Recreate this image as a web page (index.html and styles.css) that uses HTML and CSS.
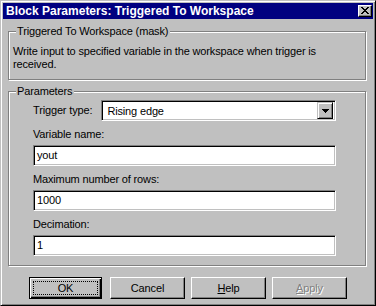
FILE: index.html
```html
<!DOCTYPE html>
<html lang="en">
<head>
    <meta charset="UTF-8">
    <title>Block Parameters: Triggered To Workspace</title>
    <link rel="stylesheet" href="styles.css">
</head>
<body>
    <div class="window">
        <div class="titlebar">
            <span class="title">Block Parameters: Triggered To Workspace</span>
            <span class="close">
                <svg width="8" height="7" viewBox="0 0 8 7" shape-rendering="crispEdges"><path d="M0 0h2v1H0zM6 0h2v1H6zM1 1h2v1H1zM5 1h2v1H5zM2 2h4v1H2zM3 3h2v1H3zM2 4h4v1H2zM1 5h2v1H1zM5 5h2v1H5zM0 6h2v1H0zM6 6h2v1H6z" fill="#000"/></svg>
            </span>
        </div>
        <div class="client">
            <div class="group mask">
                <span class="legend">Triggered To Workspace (mask)</span>
                <p class="desc">Write input to specified variable in the workspace when trigger is<br>received.</p>
            </div>
            <div class="group params">
                <span class="legend">Parameters</span>
                <div class="combo-row">
                    <span class="label">Trigger type:</span>
                    <div class="combo">
                        <span class="combo-text">Rising edge</span>
                        <span class="combo-btn">
                            <svg width="7" height="4" viewBox="0 0 7 4" shape-rendering="crispEdges"><path d="M0 0h7v1H0zM1 1h5v1H1zM2 2h3v1H2zM3 3h1v1H3z" fill="#000"/></svg>
                        </span>
                    </div>
                </div>
                <div class="field">
                    <span class="label">Variable name:</span>
                    <div class="edit">yout</div>
                </div>
                <div class="field">
                    <span class="label">Maximum number of rows:</span>
                    <div class="edit">1000</div>
                </div>
                <div class="field">
                    <span class="label">Decimation:</span>
                    <div class="edit">1</div>
                </div>
            </div>
            <div class="buttons">
                <div class="btn default"><span class="focus">OK</span></div>
                <div class="btn">Cancel</div>
                <div class="btn"><span><u>H</u>elp</span></div>
                <div class="btn disabled"><span><u>A</u>pply</span></div>
            </div>
        </div>
    </div>
</body>
</html>
```

FILE: styles.css
```css
*{
    box-sizing: border-box;
    margin: 0;
    padding: 0;
}
body{
    background-color: #c0c0c0;
    font-family: "Liberation Sans", Arial, sans-serif;
    font-size: 11px;
    letter-spacing: -0.15px;
    color: #000;
}
.window{
    width: 376px;
    height: 306px;
    border: 1px solid;
    border-color: #c0c0c0 #000 #000 #c0c0c0;
    box-shadow: inset 1px 1px #fff, inset -1px -1px #808080;
    padding: 2px;
    display: flex;
    flex-direction: column;
}
.titlebar{
    height: 16px;
    background-color: #000080;
    color: #fff;
    display: flex;
    align-items: center;
    justify-content: space-between;
    padding: 0 1px 0 3px;
}
.title{
    font-size: 12px;
    font-weight: bold;
    letter-spacing: 0;
    line-height: 16px;
}
.close{
    width: 14px;
    height: 12px;
    background-color: #c0c0c0;
    border: 1px solid;
    border-color: #fff #000 #000 #fff;
    box-shadow: inset -1px -1px #808080;
    display: flex;
    align-items: center;
    justify-content: center;
    padding-bottom: 1px;
}
.client{
    padding: 12px 7px 0 5px;
}
.group{
    position: relative;
    border: 1px solid #808080;
    box-shadow: inset 1px 1px #fff, 1px 1px #fff;
}
.legend{
    position: absolute;
    top: -8px;
    left: 7px;
    padding: 0 2px 0 1px;
    line-height: 14px;
    background-color: #c0c0c0;
}
.mask{
    height: 49px;
}
.desc{
    padding: 13px 0 0 4px;
    line-height: 13px;
}
.params{
    height: 175px;
    margin-top: 11px;
    padding: 8px 0 0 24px;
}
.label{
    display: block;
    line-height: 13px;
}
.combo-row{
    display: flex;
    align-items: center;
    gap: 9px;
    margin-bottom: 7px;
}
.combo{
    width: 235px;
    height: 21px;
    background-color: #fff;
    border: 1px solid;
    border-color: #808080 #fff #fff #808080;
    box-shadow: inset 1px 1px #000, inset -1px -1px #c0c0c0;
    display: flex;
    align-items: center;
    justify-content: space-between;
    padding: 2px 2px 2px 5px;
}
.combo-btn{
    width: 16px;
    height: 17px;
    background-color: #c0c0c0;
    border: 1px solid;
    border-color: #c0c0c0 #000 #000 #c0c0c0;
    box-shadow: inset 1px 1px #fff, inset -1px -1px #808080;
    display: flex;
    align-items: center;
    justify-content: center;
}
.field{
    margin-bottom: 7px;
}
.edit{
    width: 303px;
    height: 21px;
    margin-top: 4px;
    background-color: #fff;
    border: 1px solid;
    border-color: #808080 #fff #fff #808080;
    box-shadow: inset 1px 1px #000, inset -1px -1px #c0c0c0;
    padding: 0 0 0 3px;
    line-height: 19px;
}
.buttons{
    display: flex;
    margin: 11px 0 0 21px;
    gap: 6px;
}
.btn{
    width: 75px;
    height: 22px;
    border: 1px solid;
    border-color: #fff #000 #000 #fff;
    box-shadow: inset -1px -1px #808080;
    display: flex;
    align-items: center;
    justify-content: center;
}
.btn.default{
    width: 73px;
    margin-right: 2px;
    border-color: #000;
    box-shadow: inset 1px 1px #fff, inset -1px -1px #000, inset -2px -2px #808080;
    padding: 3px;
}
.focus{
    flex: 1;
    align-self: stretch;
    border: 1px dotted #000;
    display: flex;
    align-items: center;
    justify-content: center;
}
.btn.disabled{
    color: #808080;
    text-shadow: 1px 1px #fff;
}
```
